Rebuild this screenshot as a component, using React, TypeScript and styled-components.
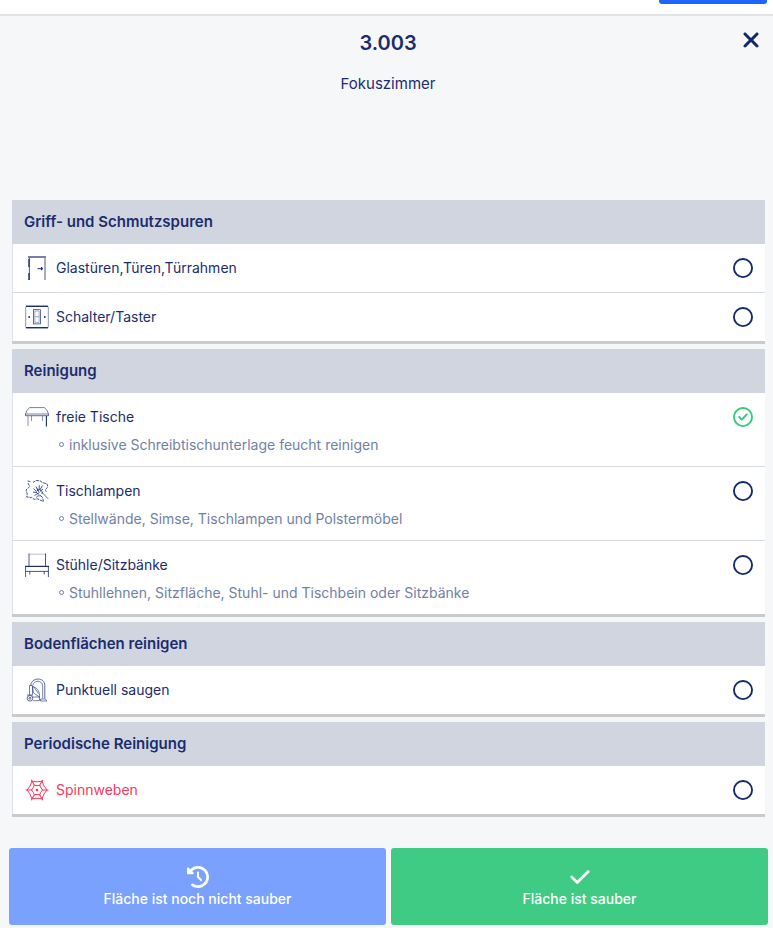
import React, { useState } from "react";
import styled, { createGlobalStyle } from "styled-components";
import { FaXmark, FaClockRotateLeft, FaCheck, FaRegCircle, FaRegCircleCheck } from "react-icons/fa6";

const navy = "#1b2d6e";

const GlobalStyle = createGlobalStyle`
  *, *::before, *::after { box-sizing: border-box; }
  body {
    margin: 0;
    background: #f6f7f9;
    color: ${navy};
    font-family: Inter, "Liberation Sans", sans-serif;
  }
  button, input { font: inherit; }
`;

const Page = styled.div`
  display: flex;
  flex-direction: column;
  min-height: 100vh;
`;

const TopBar = styled.header`
  display: flex;
  justify-content: flex-end;
  align-items: flex-start;
  height: 16px;
  padding-right: 6px;
  background: #fff;
  border-bottom: 2px solid #e2e3e4;
`;

const TopAction = styled.button`
  width: 108px;
  height: 4px;
  padding: 0;
  border: 0;
  border-radius: 0 0 3px 3px;
  background: #1f64ff;
`;

const Heading = styled.div`
  display: grid;
  grid-template-columns: 40px 1fr 40px;
  align-items: start;
  height: 184px;
  padding: 12px 2px 0 5px;
  text-align: center;
`;

const Titles = styled.div`
  grid-column: 2;
`;

const Title = styled.h1`
  margin: 0;
  font-size: 20px;
  line-height: 30px;
  font-weight: 600;
`;

const Subtitle = styled.p`
  margin: 14px 0 0;
  font-size: 15px;
  line-height: 24px;
`;

const CloseButton = styled.button`
  display: grid;
  place-items: center;
  height: 24px;
  padding: 0;
  border: 0;
  background: none;
  color: #14286a;
  cursor: pointer;
`;

const Sections = styled.main`
  flex: 1;
  display: flex;
  flex-direction: column;
  gap: 5px;
  padding: 0 8px 24px 12px;
`;

const Section = styled.section`
  border-bottom: 3px solid #c9cbcd;
`;

const SectionTitle = styled.h2`
  margin: 0;
  padding: 0 12px;
  background: #d1d5e0;
  font-size: 15px;
  line-height: 44px;
  font-weight: 600;
`;

const List = styled.ul`
  margin: 0;
  padding: 0;
  list-style: none;
  background: #fff;
  border-left: 1px solid #dde0e8;
`;

const Item = styled.li`
  & + & {
    border-top: 1px solid #d6dae4;
  }
`;

const Row = styled.label<{ $alert?: boolean }>`
  display: grid;
  grid-template-columns: 24px 1fr 20px;
  align-items: center;
  column-gap: 7px;
  height: 48px;
  padding: 0 12px;
  font-size: 14px;
  line-height: 20px;
  color: ${(p) => (p.$alert ? "#f8375f" : navy)};
  cursor: pointer;
`;

const Detail = styled.p`
  display: flex;
  align-items: center;
  gap: 5px;
  margin: 0;
  height: 25px;
  padding: 0 12px 18px 46px;
  font-size: 14px;
  line-height: 20px;
  color: #727fa6;

  &::before {
    content: "";
    width: 5px;
    height: 5px;
    border: 1px solid #727fa6;
    border-radius: 50%;
  }
`;

const Tick = styled.span<{ $done: boolean }>`
  display: grid;
  font-size: 20px;
  color: ${(p) => (p.$done ? "#2fcb7b" : "#14286a")};

  & > * {
    grid-area: 1 / 1;
  }
`;

const TickInput = styled.input`
  appearance: none;
  width: 20px;
  height: 20px;
  margin: 0;
  border-radius: 50%;
  cursor: pointer;
`;

const Footer = styled.footer`
  display: grid;
  grid-template-columns: 1fr 1fr;
  gap: 5px;
  padding: 0 5px 3px 9px;
`;

const Action = styled.button<{ $tone: "blue" | "green" }>`
  display: flex;
  flex-direction: column;
  align-items: center;
  justify-content: center;
  height: 77px;
  padding: 2px 0 0;
  border: 0;
  border-radius: 3px;
  background: ${(p) => (p.$tone === "blue" ? "#7aa1fd" : "#3fcb83")};
  color: #fff;
  font-size: 14px;
  line-height: 22px;
  font-weight: 500;
  cursor: pointer;
`;

const Glyph = styled.svg`
  display: block;
  width: 24px;
  height: 24px;
  fill: none;
  stroke: currentColor;
  stroke-width: 1;
`;

const DoorIcon = () => (
  <Glyph viewBox="0 0 24 24" aria-hidden="true">
    <path d="M3 1h18" strokeWidth="1.2" />
    <path d="M4.4 2v22M20 2v22" strokeWidth="0.8" />
    <path d="M3.9 3v8M3.9 17v7" strokeWidth="1.2" />
    <path d="M12.5 12.7h5.500" strokeWidth="1" />
    <path d="M16.600 11v3.200" strokeWidth="1.300" />
  </Glyph>
);

const SwitchIcon = () => (
  <Glyph viewBox="0 0 24 24" aria-hidden="true">
    <rect x="0.7" y="1" width="22.6" height="22" rx="1.2" strokeWidth="0.5" />
    <path d="M1 1.3h22M1 22.6h22" strokeWidth="1.3" />
    <rect x="8.5" y="4.7" width="7" height="14.2" strokeWidth="0.7" />
    <path d="M9.9 6h4.2v11.400H9.900zM9.900 11.700h4.200" strokeWidth="0.4" />
    <circle cx="4.2" cy="12" r="0.9" fill="currentColor" stroke="none" />
    <circle cx="19.8" cy="12" r="0.9" fill="currentColor" stroke="none" />
  </Glyph>
);

const TableIcon = () => (
  <Glyph viewBox="0 0 24 24" aria-hidden="true">
    <path d="M4.500 2.600h15q3 2.400 4 6.400H.500q1-4 4-6.400z" strokeWidth="0.6" />
    <path d="M.5 9v1.7h23V9" strokeWidth="0.7" />
    <path d="M3 11v10M6.500 11v5M17.500 11v5" strokeWidth="0.500" />
    <path d="M21.400 11v10.500" strokeWidth="1.100" />
  </Glyph>
);

const ClothIcon = () => (
  <Glyph viewBox="0 0 24 24" aria-hidden="true">
    <path
      d="M2.5 2l3 .6M8 3.500l3-2 4 .3 3 2 4 1 .8 3-2.500 3 1 2M3 4l1.700 3.600L1 11l1.200 4-.5 3 5 .5 2.300 1.800 3.500-.4 2 1 4 1.600-1-4-2.500-2.500"
      strokeDasharray="3 0.8"
      strokeWidth="0.800"
    />
    <path
      d="M8.500 9.500l3 3.200M11 7.600l2 4M14.300 6.200l-.2 4.700M17.500 6.500l-2.800 4.700M18 10l-3 2.400M8 13l4 .7 2 2M11.500 12l3-1.500 3 2.400-.5 2M9.500 16.500l5-3M12 9.500l2 3.500"
      strokeWidth="0.800"
    />
    <path d="M17 13.500l6.200 6.300M11 18.500l2-1.700h3" strokeWidth="0.700" />
  </Glyph>
);

const BenchIcon = () => (
  <Glyph viewBox="0 0 24 24" aria-hidden="true">
    <path d="M4 1.200h17" strokeWidth="0.300" />
    <path d="M4 .5v12.400M20.500 .5v12.400" strokeWidth="0.800" />
    <path d="M0 13.400h24" strokeWidth="1.200" />
    <path d="M.6 13v11M23.400 13v11M.6 18.400h22.800M4.800 18.500v3M19.200 18.500v3" strokeWidth="0.800" />
  </Glyph>
);

const VacuumIcon = () => (
  <Glyph viewBox="0 0 24 24" aria-hidden="true">
    <path d="M6 8V5.500C7.500 2.500 10 1 13 1c4 0 6.800 2.500 6.800 6.500v13" strokeWidth="0.700" />
    <path d="M8 7c.5-2.300 2.300-3.700 4.700-3.700 3 0 5 1.800 5 4.700v12.500" strokeWidth="0.600" />
    <path d="M15.500 23v-2h4.800l1.700 2zM4.500 7.500h3v9M4.500 7.500v9" strokeWidth="0.600" />
    <path d="M7.500 8.500c4.500 1 7 4.500 7 9.500v1l-6-4-1-6M7.500 19h7v3.700H8M8.500 8.500l5 7" strokeWidth="0.600" />
    <circle cx="5" cy="20.300" r="2.800" strokeWidth="0.700" />
    <circle cx="5" cy="20.300" r="1" strokeWidth="0.700" />
    <path d="M2 17h6" strokeWidth="0.700" />
  </Glyph>
);

const WebIcon = () => (
  <Glyph viewBox="0 0 24 24" aria-hidden="true">
    <path
      d="M.5 12h6.500M17 12h6.500M6.200 1.700l3.300 5.900M17.800 22.300l-3.300-5.900M17.800 1.700l-3.300 5.900M6.200 22.300l3.300-5.900"
      strokeWidth="1.100"
    />
    <path d="M6.900 3.200q5.100 1.200 10.200 0 1.200 5.200 4.900 8.800-3.700 3.600-4.900 8.800-5.100-1.200-10.200 0-1.200-5.200-4.900-8.800 3.700-3.600 4.900-8.800z" />
    <path d="M9.200 7.300q2.800.6 5.600 0 .8 2.700 2.700 4.700-1.900 2-2.700 4.700-2.800-.6-5.600 0-.8-2.700-2.700-4.700 1.900-2 2.700-4.700z" />
    <circle cx="12" cy="12" r="1.300" fill="currentColor" stroke="none" />
  </Glyph>
);

type Task = {
  label: string;
  icon: React.FC;
  detail?: string;
  alert?: boolean;
};

const groups: { title: string; tasks: Task[] }[] = [
  {
    title: "Griff- und Schmutzspuren",
    tasks: [
      { label: "Glastüren,Türen,Türrahmen", icon: DoorIcon },
      { label: "Schalter/Taster", icon: SwitchIcon },
    ],
  },
  {
    title: "Reinigung",
    tasks: [
      { label: "freie Tische", icon: TableIcon, detail: "inklusive Schreibtischunterlage feucht reinigen" },
      { label: "Tischlampen", icon: ClothIcon, detail: "Stellwände, Simse, Tischlampen und Polstermöbel" },
      {
        label: "Stühle/Sitzbänke",
        icon: BenchIcon,
        detail: "Stuhllehnen, Sitzfläche, Stuhl- und Tischbein oder Sitzbänke",
      },
    ],
  },
  { title: "Bodenflächen reinigen", tasks: [{ label: "Punktuell saugen", icon: VacuumIcon }] },
  { title: "Periodische Reinigung", tasks: [{ label: "Spinnweben", icon: WebIcon, alert: true }] },
];

const TaskItem = ({ task, initial }: { task: Task; initial: boolean }) => {
  const [done, setDone] = useState(initial);
  const Icon = task.icon;
  return (
    <Item>
      <Row $alert={task.alert}>
        <Icon />
        <span>{task.label}</span>
        <Tick $done={done}>
          {done ? <FaRegCircleCheck aria-hidden="true" /> : <FaRegCircle aria-hidden="true" />}
          <TickInput type="checkbox" checked={done} onChange={(e) => setDone(e.target.checked)} />
        </Tick>
      </Row>
      {task.detail && <Detail>{task.detail}</Detail>}
    </Item>
  );
};

export default function App() {
  return (
    <Page>
      <GlobalStyle />
      <TopBar>
        <TopAction type="button" aria-label="Menü" />
      </TopBar>
      <Heading>
        <Titles>
          <Title>3.003</Title>
          <Subtitle>Fokuszimmer</Subtitle>
        </Titles>
        <CloseButton type="button" aria-label="Schließen">
          <FaXmark size={24} />
        </CloseButton>
      </Heading>
      <Sections>
        {groups.map((group) => (
          <Section key={group.title}>
            <SectionTitle>{group.title}</SectionTitle>
            <List>
              {group.tasks.map((task) => (
                <TaskItem key={task.label} task={task} initial={task.label === "freie Tische"} />
              ))}
            </List>
          </Section>
        ))}
      </Sections>
      <Footer>
        <Action type="button" $tone="blue">
          <FaClockRotateLeft size={22} />
          Fläche ist noch nicht sauber
        </Action>
        <Action type="button" $tone="green">
          <FaCheck size={22} />
          Fläche ist sauber
        </Action>
      </Footer>
    </Page>
  );
}
